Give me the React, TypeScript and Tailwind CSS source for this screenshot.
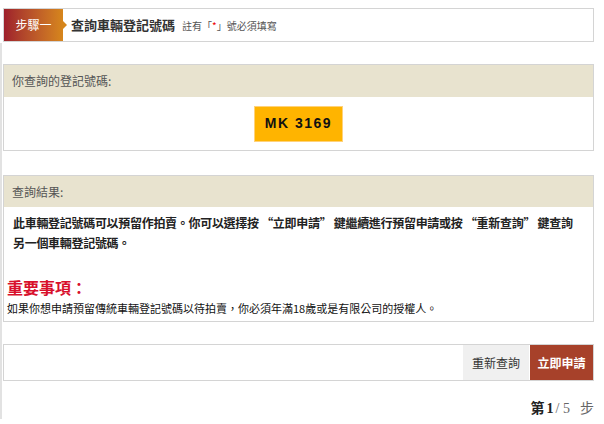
import React from 'react'

const cjk = { fontFamily: '"Noto Sans CJK TC", "Liberation Sans", sans-serif' }
const serif = { fontFamily: '"Liberation Serif", "Noto Sans CJK TC", serif' }

function App() {
  return (
    <div className="w-[604px] h-[424px] bg-white text-[#333] overflow-hidden" style={cjk}>
      {/* Step header */}
      <div className="pt-2 pl-[3px] pr-[10px]">
        <div className="flex items-center h-[34px] border border-[#d4d4d4] bg-white">
          <div className="relative h-full w-[59px] flex items-center justify-center text-white text-[12px] bg-gradient-to-r from-[#9e1f2b] to-[#d6861b]">
            步驟一
            <span className="absolute -right-[4px] top-1/2 -translate-y-1/2 w-0 h-0 border-y-[4px] border-y-transparent border-l-[4px] border-l-[#d6861b]" />
          </div>
          <span className="ml-[8px] text-[13px] font-bold text-[#333]">查詢車輛登記號碼</span>
          <span className="ml-[7px] text-[10px] text-[#555]">
            註有「<span className="text-[#e00]">*</span>」號必須填寫
          </span>
        </div>
      </div>

      <div className="mt-[1px] border-l-2 border-[#e2e2e2] pl-px pr-[10px] pt-[21px]">
        {/* Registration number */}
        <div className="border border-[#d4d4d4]">
          <div className="h-[32px] flex items-center px-[8px] bg-[#e8e3cf] text-[12px] text-[#555]">你查詢的登記號碼:</div>
          <div className="h-[53px] flex items-center justify-center">
            <div
              className="w-[89px] h-[36px] flex items-center justify-center bg-[#ffb400] border border-[#ffd27a] text-[14px] font-bold tracking-[1.5px] text-[#111]"
              style={{ fontFamily: '"Liberation Sans", Arial, sans-serif' }}
            >
              MK 3169
            </div>
          </div>
        </div>

        {/* Result */}
        <div className="mt-[24px] border border-[#d4d4d4]">
          <div className="h-[31px] flex items-center px-[8px] bg-[#e8e3cf] text-[12px] text-[#555]">查詢結果:</div>
          <div className="pl-[9px] pr-[10px] pt-[6px] text-[12px] font-bold leading-[20px] tracking-[-0.3px] text-[#222]">
            此車輛登記號碼可以預留作拍賣。你可以選擇按 “立即申請” 鍵繼續進行預留申請或按 “重新查詢” 鍵查詢另一個車輛登記號碼。
          </div>
          <div className="px-[3px] pt-[26px] pb-[4px]">
            <div className="text-[16px] font-bold leading-[20px] text-[#d8102c]" style={serif}>重要事項：</div>
            <div className="text-[11px] leading-[18px] text-[#111]">
              如果你想申請預留傳統車輛登記號碼以待拍賣，你必須年滿18歲或是有限公司的授權人。
            </div>
          </div>
        </div>

        {/* Actions */}
        <div className="mt-[22px] h-[37px] flex justify-end border border-[#d4d4d4]">
          <div className="w-[66px] flex items-center justify-center bg-[#f0f0f0] text-[12px] text-[#333]">重新查詢</div>
          <div className="w-[64px] flex items-center justify-center bg-[#a7412a] text-[12px] font-bold text-white border-l border-white">立即申請</div>
        </div>

        <div className="mt-[17px] flex justify-end items-baseline gap-[2px] text-[14px]" style={serif}>
          <span className="font-bold text-[#222]">第</span>
          <span className="font-bold text-[#222]">1</span>
          <span className="text-[#666]">/ 5</span>
          <span className="ml-[8px] text-[#666]">步</span>
        </div>
      </div>
    </div>
  )
}

export default App
